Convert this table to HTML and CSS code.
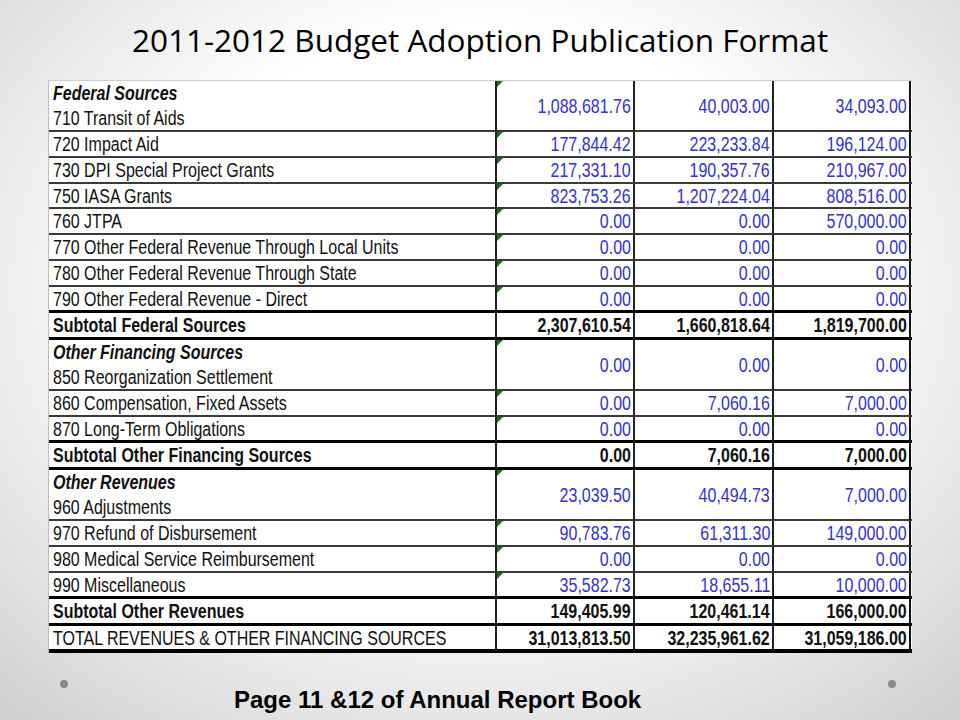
FILE: index.html
```html
<!DOCTYPE html>
<html>
<head>
<meta charset="utf-8">
<link rel="stylesheet" href="styles.css">
</head>
<body>
<div class="slide">
  <h1 class="title">2011-2012 Budget Adoption Publication Format</h1>
  <div class="sheet">
    <div class="row double">
      <div class="label"><span class="t head">Federal Sources</span><span class="t">710 Transit of Aids</span></div>
      <div class="num flag"><span class="t">1,088,681.76</span></div><div class="num"><span class="t">40,003.00</span></div><div class="num"><span class="t">34,093.00</span></div>
    </div>
    <div class="row"><div class="label"><span class="t">720 Impact Aid</span></div><div class="num flag"><span class="t">177,844.42</span></div><div class="num"><span class="t">223,233.84</span></div><div class="num"><span class="t">196,124.00</span></div></div>
    <div class="row"><div class="label"><span class="t">730 DPI Special Project Grants</span></div><div class="num flag"><span class="t">217,331.10</span></div><div class="num"><span class="t">190,357.76</span></div><div class="num"><span class="t">210,967.00</span></div></div>
    <div class="row short"><div class="label"><span class="t">750 IASA Grants</span></div><div class="num flag"><span class="t">823,753.26</span></div><div class="num"><span class="t">1,207,224.04</span></div><div class="num"><span class="t">808,516.00</span></div></div>
    <div class="row"><div class="label"><span class="t">760 JTPA</span></div><div class="num flag"><span class="t">0.00</span></div><div class="num"><span class="t">0.00</span></div><div class="num"><span class="t">570,000.00</span></div></div>
    <div class="row"><div class="label"><span class="t">770 Other Federal Revenue Through Local Units</span></div><div class="num flag"><span class="t">0.00</span></div><div class="num"><span class="t">0.00</span></div><div class="num"><span class="t">0.00</span></div></div>
    <div class="row"><div class="label"><span class="t">780 Other Federal Revenue Through State</span></div><div class="num flag"><span class="t">0.00</span></div><div class="num"><span class="t">0.00</span></div><div class="num"><span class="t">0.00</span></div></div>
    <div class="row before-sub"><div class="label"><span class="t">790 Other Federal Revenue - Direct</span></div><div class="num flag"><span class="t">0.00</span></div><div class="num"><span class="t">0.00</span></div><div class="num"><span class="t">0.00</span></div></div>
    <div class="row sub"><div class="label"><span class="t">Subtotal Federal Sources</span></div><div class="num"><span class="t">2,307,610.54</span></div><div class="num"><span class="t">1,660,818.64</span></div><div class="num"><span class="t">1,819,700.00</span></div></div>
    <div class="row double">
      <div class="label"><span class="t head">Other Financing Sources</span><span class="t">850 Reorganization Settlement</span></div>
      <div class="num flag"><span class="t">0.00</span></div><div class="num"><span class="t">0.00</span></div><div class="num"><span class="t">0.00</span></div>
    </div>
    <div class="row"><div class="label"><span class="t">860 Compensation, Fixed Assets</span></div><div class="num flag"><span class="t">0.00</span></div><div class="num"><span class="t">7,060.16</span></div><div class="num"><span class="t">7,000.00</span></div></div>
    <div class="row before-sub"><div class="label"><span class="t">870 Long-Term Obligations</span></div><div class="num flag"><span class="t">0.00</span></div><div class="num"><span class="t">0.00</span></div><div class="num"><span class="t">0.00</span></div></div>
    <div class="row sub"><div class="label"><span class="t">Subtotal Other Financing Sources</span></div><div class="num"><span class="t">0.00</span></div><div class="num"><span class="t">7,060.16</span></div><div class="num"><span class="t">7,000.00</span></div></div>
    <div class="row double">
      <div class="label"><span class="t head">Other Revenues</span><span class="t">960 Adjustments</span></div>
      <div class="num flag"><span class="t">23,039.50</span></div><div class="num"><span class="t">40,494.73</span></div><div class="num"><span class="t">7,000.00</span></div>
    </div>
    <div class="row"><div class="label"><span class="t">970 Refund of Disbursement</span></div><div class="num flag"><span class="t">90,783.76</span></div><div class="num"><span class="t">61,311.30</span></div><div class="num"><span class="t">149,000.00</span></div></div>
    <div class="row"><div class="label"><span class="t">980 Medical Service Reimbursement</span></div><div class="num flag"><span class="t">0.00</span></div><div class="num"><span class="t">0.00</span></div><div class="num"><span class="t">0.00</span></div></div>
    <div class="row before-sub"><div class="label"><span class="t">990 Miscellaneous</span></div><div class="num flag"><span class="t">35,582.73</span></div><div class="num"><span class="t">18,655.11</span></div><div class="num"><span class="t">10,000.00</span></div></div>
    <div class="row sub"><div class="label"><span class="t">Subtotal Other Revenues</span></div><div class="num"><span class="t">149,405.99</span></div><div class="num"><span class="t">120,461.14</span></div><div class="num"><span class="t">166,000.00</span></div></div>
    <div class="row total"><div class="label"><span class="t">TOTAL REVENUES &amp; OTHER FINANCING SOURCES</span></div><div class="num"><span class="t">31,013,813.50</span></div><div class="num"><span class="t">32,235,961.62</span></div><div class="num"><span class="t">31,059,186.00</span></div></div>
  </div>
  <div class="footer">
    <span class="dot"></span>
    <span class="caption">Page 11 &amp;12 of Annual Report Book</span>
    <span class="dot"></span>
  </div>
</div>
</body>
</html>
```
FILE: styles.css
```css
html, body {
  margin: 0;
  padding: 0;
}
.slide {
  width: 960px;
  height: 720px;
  overflow: hidden;
  display: flex;
  flex-direction: column;
  background: radial-gradient(ellipse 75% 80% at 50% 40%, #ffffff 45%, #e6e6e6 75%, #cfcfcf 100%);
}
.title {
  margin: 0;
  height: 80px;
  box-sizing: border-box;
  padding-top: 20px;
  font-family: "Open Sans", sans-serif;
  font-weight: 400;
  font-size: 31.5px;
  line-height: 40px;
  text-align: center;
  color: #000;
}
.sheet {
  margin-left: 48px;
  width: 864px;
  background: #fff;
  border-top: 1px solid #cfcfcf;
  border-left: 1px solid #bdbdbd;
  box-sizing: border-box;
  font-family: "Liberation Sans", Arial, sans-serif;
  font-size: 19.5px;
  color: #111;
}
.t {
  display: inline-block;
  transform: scaleX(0.82);
  transform-origin: left center;
}
.num .t {
  transform-origin: right center;
}
.row {
  display: grid;
  grid-template-columns: 446px 138px 139px 139px;
  height: 26px;
  box-sizing: border-box;
  border-bottom: 2px solid #3a3a3a;
}
.row.double { height: 51px; }
.row.short { height: 25px; }
.row.sub, .row.total {
  height: 27px;
  border-bottom: 3px solid #000;
  font-weight: 700;
}
.row.total { border-bottom-width: 4px; }
.row.before-sub { border-bottom: 3px solid #000; }
.row.total .label { font-weight: 400; }
.label {
  display: flex;
  flex-direction: column;
  justify-content: center;
  align-items: flex-start;
  padding-left: 4px;
  white-space: nowrap;
  line-height: 24px;
}
.double .label { line-height: 25px; }
.head {
  font-weight: 700;
  font-style: italic;
}
.num {
  position: relative;
  border-left: 2px solid #222;
  display: flex;
  align-items: center;
  justify-content: flex-end;
  padding-right: 2px;
  line-height: 24px;
  color: #3232cc;
  white-space: nowrap;
}
.num:last-child { border-right: 2px solid #111; }
.sub .num, .total .num { color: #111; }
.flag::before {
  content: "";
  position: absolute;
  left: 0;
  top: 0;
  width: 0;
  height: 0;
  border-top: 6px solid #1d6b1d;
  border-right: 6px solid transparent;
}
.footer {
  flex: 1;
  display: flex;
  align-items: flex-start;
  padding: 27px 64px 0 60px;
}
.dot {
  width: 8px;
  height: 8px;
  border-radius: 50%;
  background: #8a8a8a;
}
.caption {
  margin-left: 166px;
  margin-top: 8px;
  font-family: "Liberation Sans", Arial, sans-serif;
  font-weight: 700;
  font-size: 24px;
  line-height: 24px;
  color: #000;
  flex: 1;
}
```
